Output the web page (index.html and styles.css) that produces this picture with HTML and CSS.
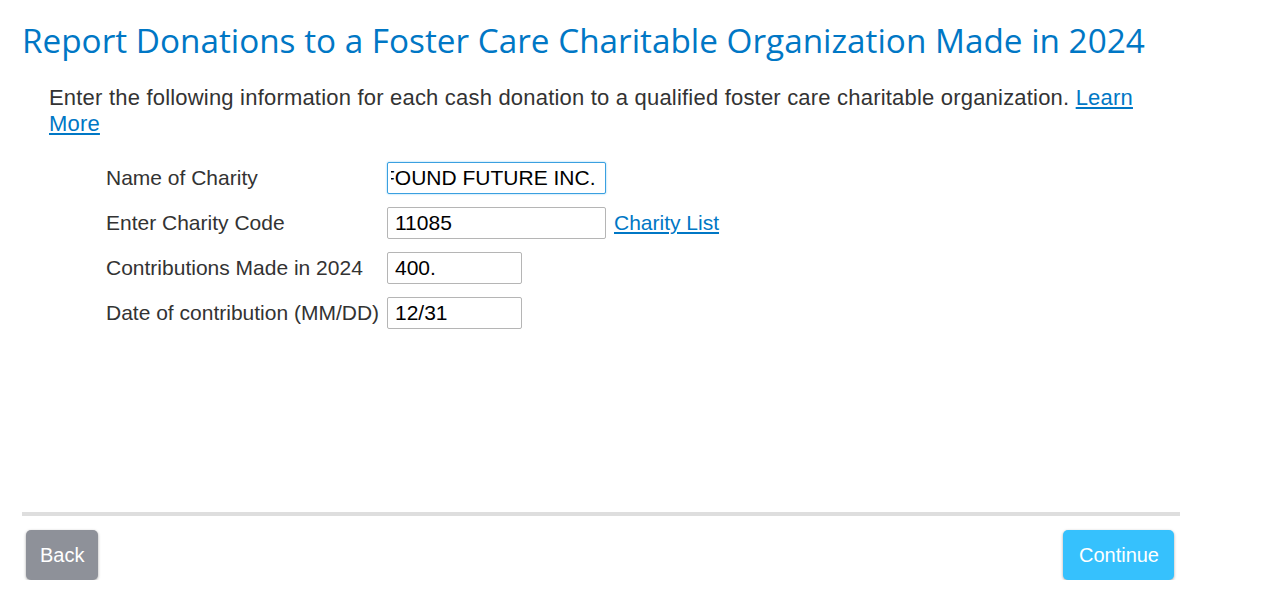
FILE: index.html
```html
<!DOCTYPE html>
<html lang="en">
<head>
<meta charset="UTF-8">
<meta name="viewport" content="width=device-width, initial-scale=1.0">
<title>Foster Care Charitable Organization</title>
<link rel="stylesheet" href="styles.css">
</head>
<body>

<div class="page">
  <h1 class="title">Report Donations to a Foster Care Charitable Organization Made in 2024</h1>

  <p class="intro">Enter the following information for each cash donation to a qualified foster care charitable organization. <a href="#">Learn More</a></p>

  <!-- Donation form -->
  <form class="donation-form" action="#" method="post">
    <div class="row">
      <label for="charity-name">Name of Charity</label>
      <input type="text" id="charity-name" class="field wide focused" value="FOUND FUTURE INC." autocomplete="off">
    </div>
    <div class="row">
      <label for="charity-code">Enter Charity Code</label>
      <input type="text" id="charity-code" class="field wide" value="11085" autocomplete="off">
      <a href="#" class="side-link">Charity List</a>
    </div>
    <div class="row">
      <label for="amount">Contributions Made in 2024</label>
      <input type="text" id="amount" class="field short" value="400." autocomplete="off">
    </div>
    <div class="row">
      <label for="date">Date of contribution (MM/DD)</label>
      <input type="text" id="date" class="field short" value="12/31" autocomplete="off">
    </div>
  </form>

  <div class="footer">
    <button type="button" class="button back">Back</button>
    <button type="button" class="button continue">Continue</button>
  </div>
</div>

</body>
</html>
```

FILE: styles.css
```css
body {
  font-family: "Liberation Sans", Arial, sans-serif;
  margin: 0;
  padding: 0;
  background-color: #fff;
  color: #333;
}
.page {
  width: 1158px;
  padding: 18px 0 0 22px;
}
.title {
  margin: 0;
  font-family: "Open Sans", sans-serif;
  font-weight: 400;
  font-size: 33.3px;
  line-height: 44px;
  color: #0077c5;
}
.intro {
  margin: 23px 0 0 27px;
  width: 1100px;
  font-size: 22px;
  line-height: 26px;
  letter-spacing: 0.2px;
}
.intro a,
.side-link {
  color: #0077c5;
}
.donation-form {
  margin: 25px 0 0 84px;
  display: flex;
  flex-direction: column;
  gap: 13px;
}
.row {
  display: flex;
  align-items: center;
  height: 32px;
}
.row label {
  width: 281px;
  font-size: 21px;
}
.field {
  height: 32px;
  box-sizing: border-box;
  padding: 0 7px;
  border: 1px solid #b5b5b5;
  border-radius: 2px;
  font-family: "Liberation Sans", Arial, sans-serif;
  font-size: 21px;
  color: #000;
}
.wide {
  width: 219px;
}
.short {
  width: 135px;
}
.focused {
  padding-left: 3px;
  border-color: #3aa0e0;
  box-shadow: 0 0 2px #7ec8f4;
  text-indent: -9px;
}
.side-link {
  margin-left: 8px;
  font-size: 21px;
}
.footer {
  margin-top: 183px;
  border-top: 4px solid #dedede;
  padding: 14px 6px 0 4px;
  display: flex;
  justify-content: space-between;
}
.button {
  height: 50px;
  padding: 0 14px;
  border: none;
  border-radius: 5px;
  color: #fff;
  font-family: "Liberation Sans", Arial, sans-serif;
  font-size: 20px;
  box-shadow: 0 1px 3px rgba(0, 0, 0, 0.35);
}
.back {
  background-color: #8e9199;
}
.continue {
  padding: 0 15px 0 16px;
  background-color: #36c1fd;
}
```
